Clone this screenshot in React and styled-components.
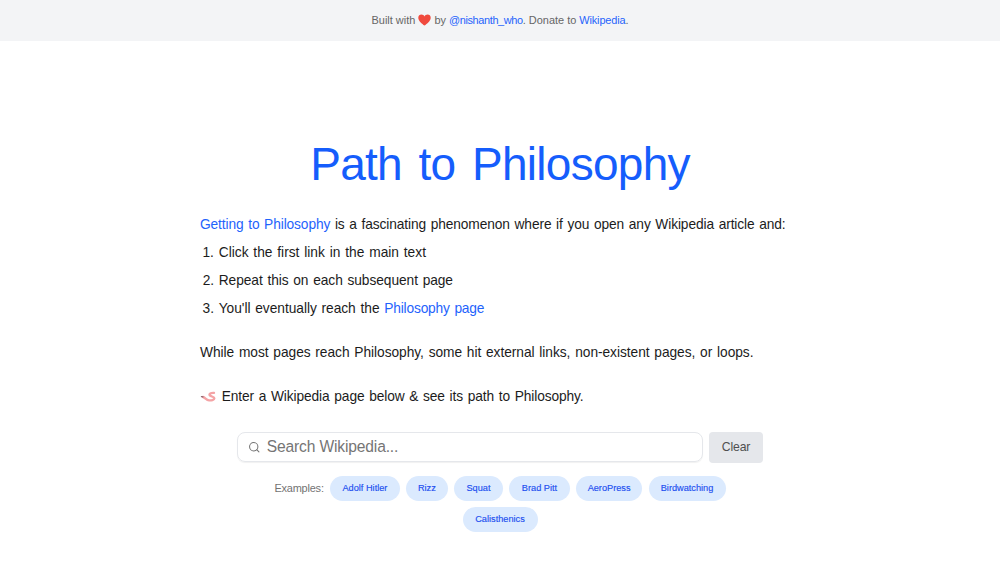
import React from 'react';
import styled, { createGlobalStyle } from 'styled-components';

const GlobalStyle = createGlobalStyle`
  * {
    box-sizing: border-box;
  }

  body {
    margin: 0;
    background: #ffffff;
    color: #1c1c1c;
    font-family: 'Liberation Sans', Arial, sans-serif;
  }
`;

const Banner = styled.header`
  display: flex;
  align-items: center;
  justify-content: center;
  height: 40.5px;
  background: #f3f4f6;
  color: #666666;
  font-size: 10.94px;
  line-height: 16px;
  white-space: pre;
`;

const Link = styled.a`
  color: #1f63fc;
  letter-spacing: ${props => props.$spacing || 0}px;
  text-decoration: none;
  cursor: pointer;
`;

const Main = styled.main`
  width: 600px;
  margin: 0 auto;
  padding-top: 93px;
`;

const Title = styled.h1`
  margin: 0;
  color: #155dfc;
  font-size: 46px;
  font-weight: 400;
  line-height: 60px;
  letter-spacing: -0.72px;
  word-spacing: 4.5px;
  text-align: center;
  white-space: nowrap;
`;

const Intro = styled.section`
  margin-top: 17px;
  font-size: 13.75px;
  line-height: 28.1px;
`;

const Line = styled.p`
  display: flex;
  align-items: center;
  margin: 0 0 ${props => props.$gap || 0}px;
  letter-spacing: ${props => props.$spacing || 0}px;
  word-spacing: 1px;
  white-space: pre;
`;

const Steps = styled.ol`
  margin: 0 0 15.7px;
  padding-left: 18.75px;
`;

const Step = styled.li`
  letter-spacing: ${props => props.$spacing || 0}px;
  word-spacing: 1px;
`;

const SearchRow = styled.form`
  display: flex;
  align-items: center;
  gap: 6.25px;
  width: 525.5px;
  margin: 20.8px auto 0;
`;

const SearchBox = styled.label`
  display: flex;
  flex: 1;
  align-items: center;
  height: 30px;
  padding: 0 10px;
  border: 1px solid #e5e7eb;
  border-radius: 8px;
  box-shadow: 0 1px 1px rgba(0, 0, 0, 0.06);
  color: #737373;
`;

const SearchInput = styled.input`
  flex: 1;
  min-width: 0;
  margin-left: 6px;
  padding: 0;
  border: 0;
  outline: 0;
  background: transparent;
  font-family: inherit;
  font-size: 15.625px;
  line-height: 22px;
  letter-spacing: -0.16px;

  &::placeholder {
    color: #757575;
    opacity: 1;
  }
`;

const ClearButton = styled.button`
  width: 53.5px;
  height: 31.25px;
  padding: 0;
  border: 0;
  border-radius: 4px;
  background: #e5e7eb;
  color: #4f4f4f;
  font-family: inherit;
  font-size: 12.2px;
  line-height: 19px;
  letter-spacing: -0.15px;
`;

const Examples = styled.div`
  display: flex;
  flex-wrap: wrap;
  align-items: center;
  justify-content: center;
  gap: 6.25px;
  width: 525px;
  margin: 12.7px auto 0;
`;

const ExamplesLabel = styled.span`
  width: 49.5px;
  color: #737373;
  font-size: 10.94px;
  line-height: 16px;
  letter-spacing: -0.2px;
  white-space: nowrap;
`;

const Pill = styled.button`
  width: ${props => props.$width}px;
  height: 25px;
  padding: 0;
  border: 0;
  border-radius: 13px;
  background: #dbeafe;
  color: #1d4ff0;
  font-family: inherit;
  font-size: 9.2px;
  line-height: 12.5px;
  -webkit-text-stroke: 0.15px currentColor;
  white-space: nowrap;
`;

const EXAMPLES = [
  { name: 'Adolf Hitler', width: 69.5 },
  { name: 'Rizz', width: 41.8 },
  { name: 'Squat', width: 49 },
  { name: 'Brad Pitt', width: 60.4 },
  { name: 'AeroPress', width: 66.4 },
  { name: 'Birdwatching', width: 77 },
  { name: 'Calisthenics', width: 75 },
];

const Heart = () => (
  <svg width="13" height="12" viewBox="0 0 13 12" aria-hidden="true">
    <path
      d="M6.500 11.600C4.100 9.800.3 6.900.3 3.700.3 1.700 1.700.5 3.400.5c1.400 0 2.500.7 3.100 1.900C7.100 1.200 8.200.5 9.600.5c1.700 0 3.100 1.200 3.100 3.200 0 3.200-3.800 6.100-6.200 7.900z"
      fill="#f04a3e"
    />
  </svg>
);

const Worm = () => (
  <svg width="17" height="14" viewBox="0 0 17 14" aria-hidden="true">
    <path
      d="M3 7C5.200 7.400 6.300 10.300 9 10.400c2 .1 5.400-.2 5.400-2.100C14.400 6.400 9.300 6.500 9.500 4.500c.2-1.400 2.300-1.700 4.500-1.600"
      fill="none"
      stroke="#f4a3a5"
      strokeWidth="2.300"
      strokeLinecap="round"
      strokeLinejoin="round"
    />
    <path d="M1.500 6.600l1.400.3" stroke="#8b6670" strokeWidth="1.400" strokeLinecap="round" />
  </svg>
);

const SearchIcon = () => (
  <svg
    width="12.5"
    height="12.5"
    viewBox="0 0 24 24"
    fill="none"
    stroke="currentColor"
    strokeWidth="2"
    strokeLinecap="round"
    aria-hidden="true"
  >
    <circle cx="11" cy="11" r="8" />
    <path d="M21 21l-4.300-4.300" />
  </svg>
);

const App = () => (
  <>
    <GlobalStyle />
    <Banner>
      <span>Built with </span>
      <Heart />
      <span> by </span>
      <Link $spacing={-0.37}>@nishanth_who</Link>
      <span>. Donate to </span>
      <Link $spacing={-0.15}>Wikipedia</Link>
      <span>.</span>
    </Banner>
    <Main>
      <Title>Path to Philosophy</Title>
      <Intro>
        <Line $spacing={-0.115}>
          <Link $spacing={-0.12}>Getting to Philosophy</Link>
          <span> is a fascinating phenomenon where if you open any Wikipedia article and:</span>
        </Line>
        <Steps>
          <Step>Click the first link in the main text</Step>
          <Step $spacing={-0.07}>Repeat this on each subsequent page</Step>
          <Step $spacing={-0.04}>
            You&apos;ll eventually reach the <Link $spacing={-0.18}>Philosophy page</Link>
          </Step>
        </Steps>
        <Line $gap={16.1} $spacing={-0.045}>
          While most pages reach Philosophy, some hit external links, non-existent pages, or loops.
        </Line>
        <Line $spacing={-0.11}>
          <Worm />
          <span> Enter a Wikipedia page below &amp; see its path to Philosophy.</span>
        </Line>
      </Intro>
      <SearchRow>
        <SearchBox>
          <SearchIcon />
          <SearchInput placeholder="Search Wikipedia..." />
        </SearchBox>
        <ClearButton type="button">Clear</ClearButton>
      </SearchRow>
      <Examples>
        <ExamplesLabel>Examples:</ExamplesLabel>
        {EXAMPLES.map(example => (
          <Pill key={example.name} $width={example.width}>
            {example.name}
          </Pill>
        ))}
      </Examples>
    </Main>
  </>
);

export default App;
